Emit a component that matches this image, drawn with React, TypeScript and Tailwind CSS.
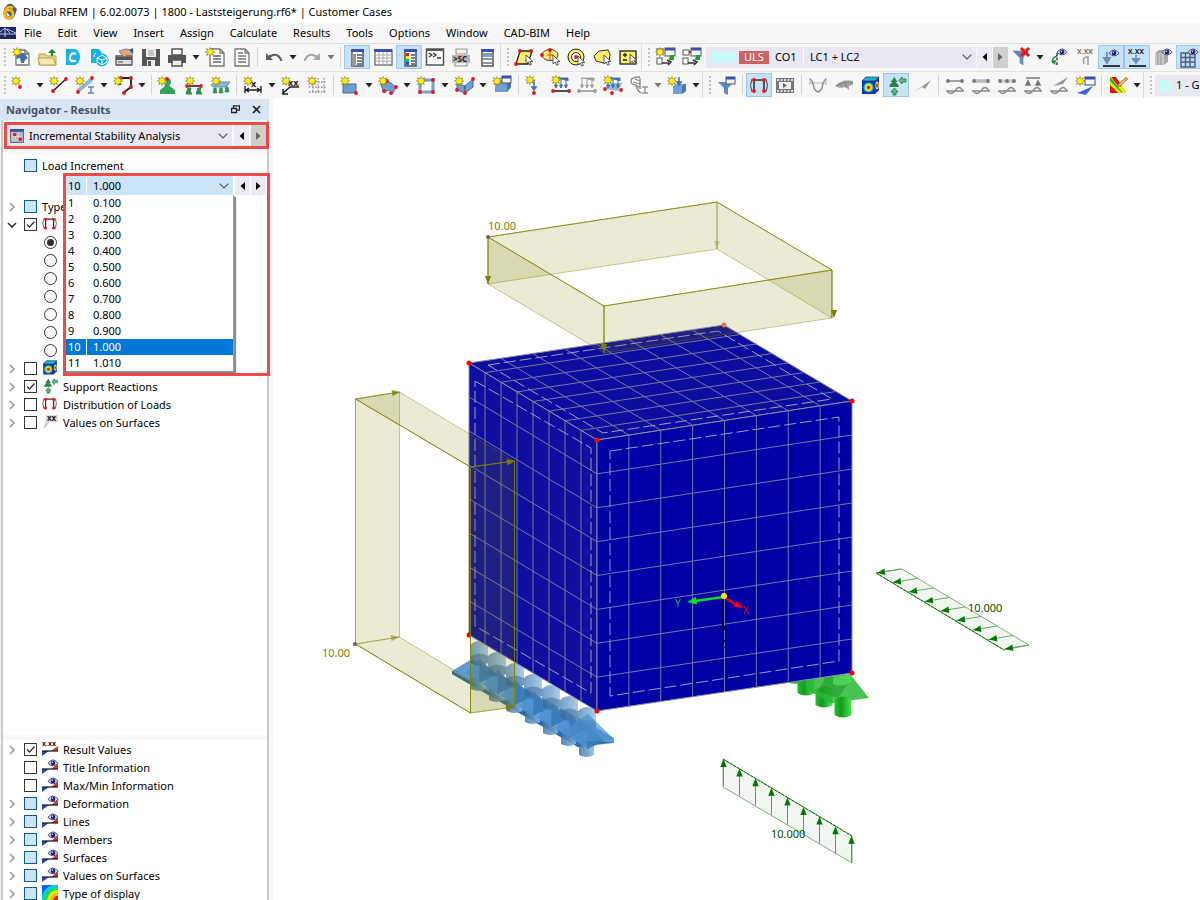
import { Fragment, type ReactNode } from "react";

type Icons = Record<string, ReactNode>;

/* ---------- icon building blocks (26 x 24 canvas) ---------- */

const Star = ({ x, y }: { x: number; y: number }) => (
  <g transform={`translate(${x} ${y})`}>
    <path d="M0-5.5L1-2.5 4.5-4 2.6-.9 5.5 0 2.6 1 4 4 1 2.7 0 5.5-1 2.7-4 4-2.6 1-5.5 0-2.6-.9-4.5-4-1-2.5Z" fill="#8f8a3c" />
    <circle r="2.8" fill="#ffee00" />
  </g>
);
const Dot = ({ x, y, c = "#e8141c" }: { x: number; y: number; c?: string }) => <circle cx={x} cy={y} r="1.9" fill={c} />;
const Eye = ({ x, y }: { x: number; y: number }) => (
  <g transform={`translate(${x} ${y})`}>
    <path d="M-5 .3Q0-6.500 5 .3Q0 5.500-5 .3Z" fill="#d3d5ee" stroke="#4b4d80" strokeWidth="1" />
    <circle r="2.300" fill="#1b1d76" />
    <circle cx="-.6" cy="-.8" r=".8" fill="#e4e6ff" />
  </g>
);
const Win = ({ x, y, w = 10, h = 8 }: { x: number; y: number; w?: number; h?: number }) => (
  <g>
    <rect x={x} y={y} width={w} height={h} fill="#f4f4f4" stroke="#555" />
    <rect x={x} y={y} width={w} height="2.5" fill="#3550b8" />
  </g>
);
const Sheet = ({ x, y, w = 14, h = 17 }: { x: number; y: number; w?: number; h?: number }) => (
  <path d={`M${x} ${y}h${w - 4}l4 4v${h - 4}h-${w}z M${x + w - 4} ${y}v4h4`} fill="#fff" stroke="#777" strokeWidth="1.3" />
);
const Cursor = ({ x, y }: { x: number; y: number }) => (
  <path transform={`translate(${x} ${y})`} d="M0 0v9l2.2-2 1.6 3.2 1.6-.8-1.6-3h3z" fill="#fff" stroke="#444" strokeWidth=".9" />
);
const Mini = ({ x, y, s = 8, c = "#222", t }: { x: number; y: number; s?: number; c?: string; t: string }) => (
  <text x={x} y={y} fontSize={s} fontWeight="700" fill={c}>{t}</text>
);
const Arrows = ({ c }: { c: string }) => (
  <path d="M8 5v8M13 5v8M18 5v8M7 5h13v3M6.500 12l1.500 3 1.500-3zM11.500 12l1.500 3 1.500-3zM16.500 12l1.500 3 1.500-3z" fill={c} stroke={c} strokeWidth="1" />
);
const Cube = () => (
  <g>
    <path d="M6 8l5-3h11v9l-4 5H6z" fill="#6f9fd0" />
    <path d="M6 8l5-3h11l-4 3z" fill="#b4cfe8" />
    <path d="M18 8l4-3v9l-4 5z" fill="#4878b0" />
  </g>
);
const Wave = () => <path d="M4 18h18M5 18q3 5 8 0q4-7 8 0" fill="none" stroke="#8a8a8a" strokeWidth="1.4" />;
const Bracket = () => (
  <g fill="none">
    <path d="M6 6Q3 12 6 19M20 6q3 6 0 13" stroke="#444" />
    <path d="M8 19V7h10v12" stroke="#333" strokeWidth="1.6" />
    <Dot x={8} y={7} /><Dot x={18} y={7} /><Dot x={8} y={18} /><Dot x={18} y={18} />
  </g>
);
const Contour = () => (
  <g>
    <path d="M5 8l4-4h13v13l-4 4H5z" fill="#1230c8" />
    <path d="M5 8l4-4h13l-4 4z" fill="#18b8d8" stroke="#123" strokeWidth=".6" />
    <ellipse cx="11.500" cy="14.500" rx="5" ry="5" fill="#15c8c0" /><ellipse cx="11.500" cy="14.500" rx="3.600" ry="3.800" fill="#e8e800" /><circle cx="11.500" cy="14.500" r="1.800" fill="#e01010" />
    <ellipse cx="20" cy="12.500" rx="1.700" ry="4" fill="#d8e820" /><ellipse cx="20" cy="12.500" rx=".8" ry="2" fill="#e01010" />
  </g>
);
const Reactions = () => (
  <g>
    <path d="M11.500 4l3 5h-2l3 3v2h-9v-2l3-3h-2z" fill="#2d7f49" />
    <path d="M10 22h3v-3h2l-3.500-4-3.500 4h2zM16 7.500L19 4v2h4v3h-4v2z" fill="#55c270" stroke="#216e38" strokeWidth=".8" />
  </g>
);

const ICONS: Icons = {
  newModel: <><Sheet x={8} y={5} w={13} h={15} /><path d="M8 14q1-7 8-6l4 5-3 2-1 3h-3l-1-5z" fill="#466a9b" /><Star x={9} y={7} /></>,
  open: <><path d="M5 9h6l2 2h9v9H5z" fill="#e8d889" stroke="#b5a353" /><path d="M4 13h15l3 7H6z" fill="#f3eab2" stroke="#b5a353" /><path d="M17 11V8h-3l4-4 4 4h-3v3z" fill="#128a2c" /></>,
  cloud: <><path d="M6 4h9q5 2 5 8t-5 8H6z" fill="#12b4e4" /><path d="M16 9q-5-2-6 3t6 4" fill="none" stroke="#fff" strokeWidth="2.2" /></>,
  cloudCube: <><path d="M5 4h8l3 4v10H5z" fill="#12b4e4" /><circle cx="16" cy="15" r="6.500" fill="#12b4e4" /><path d="M16 10l5 3v4l-5 3-5-3v-4zM11 13l5 2 5-2M16 15v5M10 8q-2 1-2 4" fill="none" stroke="#fff" /></>,
  cards: <><path d="M4 11h16v9H4z" fill="#ddd" stroke="#555" strokeWidth="1.300" /><path d="M4 12h16v3H4z" fill="#555" /><path d="M7 6l6-2 8 1-1 6-4-1-4 2-3-3z" fill="#dba98a" stroke="#84604c" strokeWidth=".7" /><path d="M17 5l4-2v6z" fill="#2857a0" /><path d="M6 17h5" stroke="#555" /></>,
  save: <><path d="M4 4h18v17H4z" fill="#555" /><path d="M8 4h10v8H8zM9 15h8v6H9z" fill="#eee" /><path d="M10 6h6M10 8h6M10 10h6" stroke="#999" /><path d="M10 16h3v5h-3z" fill="#555" /></>,
  print: <><path d="M8 4h10v6H8z" fill="#fff" stroke="#555" strokeWidth="1.500" /><path d="M4 10h18v8H4z" fill="#555" /><path d="M8 15h10v6H8z" fill="#eee" stroke="#555" strokeWidth="1.500" /></>,
  report: <><Sheet x={8} y={4} /><path d="M11 11h8M11 14h8M11 17h8" stroke="#666" strokeWidth="1.300" /><Star x={8} y={7} /></>,
  doc: <><Sheet x={7} y={4} /><path d="M10 8h5M10 11h8M10 14h8M10 17h8" stroke="#777" strokeWidth="1.300" /></>,
  undo: <path d="M5 8v7h7l-2.500-2.500q6-5 10 3.500h2Q18 5 7.500 10.500z" fill="#5d5d5d" />,
  redo: <path d="M21 8v7h-7l2.500-2.500q-6-5-10 3.500h-2Q8 5 18.500 10.500z" fill="#a6a6a6" />,
  navigator: <><rect x="8" y="5" width="11" height="16" fill="#fff" stroke="#555" strokeWidth="1.500" /><path d="M7 4h13v3H7z" fill="#3550b8" /><path d="M8 9h4v12H8z" fill="#999" /><path d="M13 10h5M13 13h5M13 16h5M13 19h5" stroke="#555" strokeWidth="1.300" /></>,
  table: <><rect x="5" y="5" width="17" height="15" fill="#fff" stroke="#666" strokeWidth="1.300" /><path d="M4 4h18v3H4z" fill="#3550b8" /><path d="M5 10h17M5 13h17M5 16h17M9 7v13M13 7v13M17 7v13" stroke="#aaa" /></>,
  panel: <><rect x="9" y="5" width="11" height="16" fill="#fff" stroke="#555" strokeWidth="1.500" /><path d="M8 4h13v3H8z" fill="#3550b8" /><path d="M10 8h3v3h-3z" fill="#e11" /><path d="M10 11h3v3h-3z" fill="#ee0" /><path d="M10 14h3v3h-3z" fill="#0c6" /><path d="M10 17h3v3h-3z" fill="#15e" /><path d="M15 10h4M15 13h4M15 16h4M15 19h4" stroke="#555" strokeWidth="1.300" /></>,
  console: <><rect x="4.500" y="4" width="17" height="16" fill="#fff" stroke="#555" strokeWidth="1.500" /><path d="M4 4h18v2H4z" fill="#555" /><path d="M7 8l3 2-3 2M11 8l3 2-3 2M15 13h4" fill="none" stroke="#333" strokeWidth="1.300" /></>,
  script: <><path d="M8 4h11v5H8zM7 17h12v4H7z" fill="#eee" stroke="#999" strokeWidth="1.200" /><path d="M4 10h18v8H4z" fill="#b4b4b4" /><Mini x={5} y={17} s={8} t=">SC" /></>,
  list: <><rect x="8" y="5" width="11" height="16" fill="#fff" stroke="#555" strokeWidth="1.500" /><path d="M7 4h13v3H7z" fill="#3550b8" /><path d="M9 9h9M9 14h9M9 18h9" stroke="#777" strokeWidth="1.300" /><path d="M9 11h9" stroke="#38c" strokeWidth="1.500" /></>,
  selRhomb: <><path d="M9 6h12l-4 13H5z" fill="#fbef6a" stroke="#222" strokeWidth="1.300" /><Dot x={9} y={6} /><Dot x={20} y={6} /><Dot x={5} y={19} /><Cursor x={15} y={10} /></>,
  selEllipse: <><ellipse cx="13" cy="10" rx="8" ry="5.500" fill="#fbef6a" stroke="#444" /><path d="M13 6v9M10 10h6" stroke="#e11" strokeWidth=".8" /><Dot x={5} y={10} /><Dot x={13} y={5} /><Cursor x={16} y={10} /></>,
  selRing: <><circle cx="13" cy="12" r="8" fill="#fbef6a" stroke="#222" /><circle cx="13" cy="12" r="4.500" fill="#fff" stroke="#222" /><Dot x={13} y={12} /><Cursor x={15} y={11} /></>,
  selPoly: <><path d="M5 11l5-5 9-1 2 4-1 8-5 1-8-2z" fill="#fbef6a" stroke="#333" /><Cursor x={15} y={10} /></>,
  selBox: <><rect x="5" y="6" width="16" height="13" fill="#fbef6a" stroke="#222" strokeWidth="1.300" /><path d="M8 10h4M10 8v4M8 15h4" stroke="#222" strokeWidth="1.300" /><Cursor x={15} y={9} /></>,
  caseNew: <><Win x={5} y={4} w={6} h={5} /><Win x={13} y={3} /><Star x={8} y={7} /><rect x="5" y="13" width="5" height="6" fill="#fff" stroke="#555" /><path d="M18 10h4v5h-5z" fill="#16a038" /><path d="M10 18h7M15 15l4 2-3 3" fill="none" stroke="#333" strokeWidth="1.500" /></>,
  caseGo: <><rect x="5" y="5" width="6" height="5" fill="#fff" stroke="#555" /><Win x={13} y={3} /><rect x="5" y="13" width="5" height="6" fill="#fff" stroke="#555" /><path d="M18 10h4v5h-5z" fill="#16a038" /><path d="M11 7h2M10 18h7M15 15l4 2-3 3" fill="none" stroke="#333" strokeWidth="1.500" /></>,
  filterX: <><path d="M5 6h15l-5 7v7l-3-2v-5z" fill="#5d8bc4" stroke="#7a8aa0" strokeWidth=".7" /><path d="M13 3l8 8M21 3l-8 8" stroke="#f01414" strokeWidth="3" /></>,
  loadEye: <><path d="M11 11q-6 2-4 7" fill="none" stroke="#189038" strokeWidth="1.500" /><path d="M5 16l4 4 1-5z" fill="#189038" /><path d="M11 8v12" stroke="#333" strokeDasharray="3 1.500" strokeWidth="1.300" /><Eye x={16} y={7} /></>,
  valDim: <><Mini x={5} y={9} s={7} c="#777" t="X.XX" /><path d="M15 12q-5 0-3 7M16 11v9" fill="none" stroke="#999" strokeWidth="1.500" /></>,
  loadEyeBox: <><path d="M9 7v8M6 13l3 5 3-5z" fill="#6f8fb4" stroke="#6f8fb4" strokeWidth="1.800" /><path d="M5 21h17" stroke="#222" strokeWidth="1.800" /><Eye x={16} y={8} /></>,
  valBox: <><Mini x={4} y={9} s={7} t="X.XX" /><path d="M12 10v5M9 14l3 4 3-4z" fill="#6f8fb4" stroke="#6f8fb4" strokeWidth="1.800" /><path d="M5 21h17" stroke="#222" strokeWidth="1.800" /></>,
  solidEye: <><path d="M5 8l4-3h9v12l-4 3H5z" fill="#aaa" /><path d="M5 8h9v12H5z" fill="#c8c8c8" /><path d="M8 8v12M11 8v12" stroke="#999" /><Eye x={17} y={7} /></>,
  meshEye: <><path d="M5 8h14v14H5z" fill="#c5dbf0" /><path d="M5 8h14v14H5zM9.500 8v14M14 8v14M5 12.500h14M5 17h14" fill="none" stroke="#446484" strokeWidth="1.400" /><Eye x={17} y={7} /></>,
  node: <><Star x={8} y={8} /><Dot x={12} y={14} /></>,
  line: <><path d="M7 18L20 6" stroke="#222" strokeWidth="1.600" /><Dot x={20} y={6} /><Dot x={7} y={18} /><Star x={8} y={8} /></>,
  member: <><path d="M6 18L20 6" stroke="#8fb4dc" strokeWidth="4" /><Dot x={20} y={5} /><Dot x={6} y={19} /><path d="M16 14h6M19 14v6M16 20h6" stroke="#6a7fa8" strokeWidth="1.500" /><Star x={8} y={8} /></>,
  polyline: <><path d="M11 5h10v9l-8 6M10 5v7" fill="none" stroke="#222" strokeWidth="1.800" /><Dot x={11} y={5} /><Dot x={21} y={5} /><Dot x={21} y={14} /><Dot x={14} y={20} /><Star x={8} y={8} /></>,
  support: <><path d="M12 5q4 0 4 3.500T14 12l2 2 4 3v4H5v-4l4-3 1-2z" fill="#36a262" /><Dot x={12} y={6} /><Star x={7} y={8} /></>,
  lineSupport: <><path d="M5 13h16" stroke="#222" strokeWidth="1.600" /><path d="M5 21l1-3 1-3h3l-1 3 2 3zM15 21l1-3 1-3h3l-1 3 2 3z" fill="#2d9150" stroke="#2d9150" /><Dot x={6} y={13} /><Dot x={20} y={13} /><Star x={9} y={8} /></>,
  surfSupport: <><path d="M4 12l5-3h14l-4 5H6z" fill="#8ebad8" stroke="#467090" strokeWidth=".7" /><path d="M6 20l1-5h2l1 5zM12 20l1-5h2l1 5zM18 19l1-5h2l1 5z" fill="#2d9150" stroke="#2d9150" strokeWidth=".7" /><Star x={9} y={8} /></>,
  dimension: <><path d="M5 13v7M21 13v7M6 17h14M9 15l-3 2 3 2M17 15l3 2-3 2" fill="none" stroke="#222" strokeWidth="1.400" /><Mini x={11} y={14} s={9} t="x" /><Star x={8} y={8} /></>,
  note: <><path d="M21 14H12l-8 7M5 16v5h5" fill="none" stroke="#222" strokeWidth="1.400" /><Mini x={10} y={13} s={9} t="xx" /><Star x={8} y={8} /></>,
  grid: <><path d="M9 5v15M14 5v15M20 5v15M5 9h17M5 14h17M5 19h17" stroke="#8590a0" strokeDasharray="1.500 1.500" strokeWidth="1.300" /><Star x={8} y={8} /></>,
  surface: <><path d="M6 11h13v9H6z" fill="#6f9fd0" stroke="#476d98" /><Dot x={19} y={20} /><Star x={8} y={8} /></>,
  shell: <><path d="M6 12q7-8 15 3l-4 6q-1-5-4-4l-4 3z" fill="#6f9fd0" stroke="#476d98" /><Dot x={21} y={14} /><Dot x={9} y={18} /><Dot x={16} y={20} /><Dot x={12} y={8} /><Star x={8} y={8} /></>,
  opening: <><rect x="7" y="7" width="13" height="12" fill="#fff" stroke="#7f9fc4" strokeWidth="3" /><Dot x={7} y={19} /><Dot x={20} y={19} /><Dot x={20} y={7} /><Dot x={7} y={7} /><Star x={8} y={8} /></>,
  solid: <><path d="M6 11l8 2 8-7v8l-8 6-8-3z" fill="#6f9fd0" stroke="#476d98" /><path d="M14 13v7" stroke="#345" /><Dot x={22} y={6} /><Dot x={14} y={20} /><Dot x={6} y={17} /><Star x={8} y={8} /></>,
  solidWin: <><Cube /><Win x={13} y={3} w={9} h={7} /><Star x={8} y={8} /></>,
  nodalLoad: <><path d="M12 7v8M10 14l2 3 2-3z" fill="#3f6fb4" stroke="#3f6fb4" strokeWidth="1.500" /><Dot x={12} y={20} /><Star x={8} y={7} /></>,
  lineLoad: <><Arrows c="#3f6fb4" /><path d="M5 18h16" stroke="#222" strokeWidth="1.600" /><Dot x={5} y={18} /><Dot x={21} y={18} /><Star x={8} y={7} /></>,
  grayLoad: <><Arrows c="#a2a2a2" /><path d="M5 18h16" stroke="#999" strokeWidth="1.600" /><Dot x={5} y={18} c="#999" /><Dot x={21} y={18} c="#999" /></>,
  surfLoad: <><path d="M5 16l6-6h11l-4 8z" fill="#8ebad8" /><Arrows c="#3f6fb4" /><Dot x={5} y={16} /><Dot x={12} y={20} /><Dot x={21} y={17} /><Star x={8} y={7} /></>,
  imposed: <><path d="M14 4q-9 0-9 4t5 4q1 5 5 8M14 5v11M7 9l7 2M9 6l5 2M10 13l4 1" fill="none" stroke="#8a8a8a" strokeWidth="1.300" /><path d="M16 14h6M19 14v6M16 20h6" stroke="#999" strokeWidth="1.500" /></>,
  solidLoad: <><path d="M9 13l4-2h9v7l-4 3H9z" fill="#6f9fd0" /><path d="M18 13l4-2v7l-4 3z" fill="#4878b0" /><path d="M15 4v6M13 9l2 3 2-3z" fill="#3f6fb4" stroke="#3f6fb4" strokeWidth="1.500" /><Star x={8} y={8} /></>,
  filterWin: <><path d="M5 9h16l-6 6v7l-4-2v-5z" fill="#5d8bc4" /><Win x={13} y={4} w={9} h={7} /></>,
  frame: <Bracket />,
  film: <><rect x="4" y="5" width="18" height="15" fill="#777" /><path d="M5 7h16M5 18h16" stroke="#fff" strokeDasharray="2 1.500" strokeWidth="1.500" /><path d="M7 9h12v7H7z" fill="#eee" /><path d="M11 10v5l4-2.500z" fill="#666" /></>,
  moment: <><path d="M4 10h18M5 5v7M21 5v7" stroke="#bbb" /><path d="M5 6q3 2 4 9 4 8 8 0 1-7 4-9" fill="none" stroke="#888" strokeWidth="1.400" /></>,
  fan: <><path d="M4 13q8-8 18-5v4l-4 1v4q-3-4-9-2z" fill="#a4a4a4" /><path d="M5 13q8-5 17-3M8 11l4 3M13 9l3 5" fill="none" stroke="#777" strokeWidth=".8" /></>,
  contour: <Contour />,
  reactions: <Reactions />,
  plane: <path d="M5 19L22 7l-6 9-3-2z" fill="#9a9a9a" />,
  r1: <><path d="M6 8h14" stroke="#888" strokeWidth="1.500" /><Dot x={6} y={8} c="#777" /><Dot x={20} y={8} c="#777" /><Wave /></>,
  r2: <><path d="M6 8h14" stroke="#bbb" strokeWidth="3.500" /><Dot x={6} y={8} c="#777" /><Dot x={20} y={8} c="#777" /><Wave /></>,
  r3: <><path d="M6 8h14" stroke="#ccc" strokeWidth="3.500" /><Dot x={6} y={8} c="#777" /><Dot x={13} y={8} c="#777" /><Dot x={20} y={8} c="#777" /><Wave /></>,
  r4: <><path d="M6 5h14M6 12l2-4 2 4zM16 12l2-4 2 4z" fill="#777" stroke="#777" strokeWidth="1.500" /><Wave /></>,
  r5: <><path d="M7 13l15-9-5 7z" fill="#999" /><Wave /></>,
  r6: <><path d="M5 20q8-3 16-7l-7 9z" fill="#3a63dc" /><Win x={13} y={4} /><Star x={8} y={8} /></>,
  colors: <><path d="M5 4h16v16H5z" fill="#fff" /><path d="M5 4l16 16H5z" fill="#16b030" /><path d="M5 8l12 12h-4L5 12z" fill="#f4ea00" /><path d="M5 12l8 8H5z" fill="#e81010" /><path d="M5 4h5l11 14v2h-3z" fill="#f4ea00" /><path d="M6 4h5l6 9-3 1z" fill="#e81010" /><path d="M12 13l9-9 2 2-9 8z" fill="#f0b050" stroke="#b07030" strokeWidth=".7" /></>,
};

/* ---------- toolbar ---------- */

const Caret = ({ muted }: { muted?: boolean }) => (
  <button type="button" aria-label="More" className="flex h-6 w-3 shrink-0 items-center justify-center">
    <svg width="8" height="5" viewBox="0 0 8 5"><path d="M.5 0h7L4 4.500z" fill={muted ? "#777" : "#222"} /></svg>
  </button>
);
const Sep = () => <span className="mx-[3px] h-5 w-px shrink-0 bg-[#d4d4d4]" />;
const Grip = () => (
  <svg className="w-2 shrink-0" height="20" viewBox="0 0 8 20">
    <path d="M5 1v18" stroke="#c4c4c4" strokeWidth="2" strokeDasharray="2 2" />
  </svg>
);
const GroupEdge = () => <span className="mr-0.5 w-px shrink-0 self-stretch bg-[#dcdcdc]" />;

/* "v" caret, "w" muted caret, "|" separator, "[" start of a docked group; "*" marks a pressed tool */
function Tools({ items }: { items: string }) {
  return (
    <>
      {items.split(" ").map((item, i) => {
        if (item === "v") return <Caret key={i} />;
        if (item === "w") return <Caret key={i} muted />;
        if (item === "|") return <Sep key={i} />;
        if (item === "[") return <Fragment key={i}><GroupEdge /><Grip /></Fragment>;
        const pressed = item.startsWith("*");
        const name = pressed ? item.slice(1) : item;
        return (
          <button
            key={i}
            type="button"
            aria-label={name}
            aria-pressed={pressed}
            className={`h-6 w-[26px] shrink-0 ${pressed ? "bg-[#c7e1f7] outline -outline-offset-1 outline-[#96c8f0]" : ""}`}
          >
            <svg width="26" height="24" viewBox="0 0 26 24">{ICONS[name]}</svg>
          </button>
        );
      })}
    </>
  );
}

const Chevron = () => (
  <svg className="pointer-events-none mr-1 shrink-0" width="10" height="6" viewBox="0 0 10 6">
    <path d="M.7.7L5 5 9.300.7" fill="none" stroke="#555" strokeWidth="1.200" />
  </svg>
);

function Step({ dir, dim, className }: { dir: "prev" | "next"; dim?: boolean; className: string }) {
  return (
    <button type="button" aria-label={dir} className={`flex w-[15px] shrink-0 items-center justify-center ${className} ${dim ? "bg-[#cfcfcf]" : "bg-[#ebebf4]"}`}>
      <svg width="5" height="8" viewBox="0 0 5 8">
        <path d={dir === "prev" ? "M5 0v8L.5 4z" : "M0 0v8l4.500-4z"} fill={dim ? "#666" : "#000"} />
      </svg>
    </button>
  );
}

/* ---------- navigator ---------- */

const ValueIcon = ({ text }: { text?: boolean }) => (
  <svg className="overflow-visible" width="16" height="16" viewBox="0 0 16 16">
    <path d="M0 15V10h7z" fill="#2448b8" /><path d="M16 5v5H9z" fill="#e03018" /><path d="M0 10h16" stroke="#222" strokeWidth="1.300" />
    {text ? <Mini x={0} y={5} s={7} t="x.xx" /> : <Eye x={11} y={4} />}
  </svg>
);
const Wrap = ({ children }: { children: ReactNode }) => <svg width="16" height="16" viewBox="4 3 19 20">{children}</svg>;
const RampIcon = () => (
  <svg width="16" height="16" viewBox="0 0 16 16">
    <path d="M0 0h16v16H0z" fill="#1060e8" /><circle cx="16" cy="16" r="17" fill="#10c8e8" /><circle cx="16" cy="16" r="14" fill="#20d850" /><circle cx="16" cy="16" r="11" fill="#d8f010" /><circle cx="16" cy="16" r="8" fill="#f8b010" /><circle cx="16" cy="16" r="5" fill="#e82010" />
  </svg>
);
const XXIcon = () => (
  <svg width="16" height="16" viewBox="0 0 16 16"><path d="M4 1h12v7H7l-5 6z" fill="#dcdcdc" /><path d="M7 8l-5 6" stroke="#aaa" /><Mini x={5} y={7} s={8} t="xx" /></svg>
);

type RowData = { label: string; hidden?: boolean; state?: "on" | "off" | "mixed"; arrow?: "closed" | "open"; icon?: ReactNode };

function Box({ id, state, name }: { id: string; state: string; name?: string }) {
  return (
    <span className="relative mb-0.5 size-[13px] shrink-0">
      <input
        id={id}
        type="checkbox"
        aria-label={name}
        defaultChecked={state === "on"}
        className={`block size-[13px] appearance-none border ${state === "mixed" ? "border-[#0a5c9e] bg-[#cce4f7]" : "border-[#333] bg-white"}`}
      />
      {state === "on" && (
        <svg className="pointer-events-none absolute inset-0" width="13" height="13" viewBox="0 0 13 13"><path d="M3 6.500L5.500 9l5-5.500" fill="none" stroke="#333" strokeWidth="1.300" /></svg>
      )}
    </span>
  );
}

function Row({ label, hidden, state = "off", arrow, icon }: RowData) {
  const id = `row-${label.replace(/\W/g, "-")}-${state}`;
  return (
    <li className="flex h-[18px] items-center gap-[5px] pl-1">
      <span className="flex w-3 shrink-0">
        {arrow && (
          <button type="button" aria-label={`Toggle ${label}`}>
            <svg width="10" height="10" viewBox="0 0 10 10">
              <path d={arrow === "open" ? "M1 3l4 4 4-4" : "M3 1l4 4-4 4"} fill="none" stroke={arrow === "open" ? "#333" : "#999"} strokeWidth="1.600" />
            </svg>
          </button>
        )}
      </span>
      <Box id={id} state={state} name={hidden ? label : undefined} />
      {icon && <span className="mb-0.5 flex size-4 shrink-0">{icon}</span>}
      {!hidden && <label htmlFor={id} className="whitespace-nowrap">{label}</label>}
    </li>
  );
}

const LOWER: RowData[] = [
  { label: "Result Values", state: "on", arrow: "closed", icon: <ValueIcon text /> },
  { label: "Title Information", icon: <ValueIcon /> },
  { label: "Max/Min Information", icon: <ValueIcon /> },
  ...["Deformation", "Lines", "Members", "Surfaces", "Values on Surfaces"].map(
    (label): RowData => ({ label, state: "mixed", arrow: "closed", icon: <ValueIcon /> }),
  ),
  { label: "Type of display", state: "mixed", arrow: "closed", icon: <RampIcon /> },
];

const STEPS = ["0.100", "0.200", "0.300", "0.400", "0.500", "0.600", "0.700", "0.800", "0.900", "1.000", "1.010"];

function IncrementPicker() {
  return (
    <li className="relative flex h-[23px] pl-[61px]">
      <div className="relative z-10 mt-px flex h-[19px] w-[169px] items-center bg-[#cce4f7]">
        <span className="w-[22px] pl-1">10</span>
        <span className="h-4 w-px bg-white" />
        <select aria-label="Load increment" className="min-w-0 flex-1 appearance-none bg-transparent pl-1.5 outline-none"><option>1.000</option></select>
        <Chevron />
      </div>
      <div className="relative z-10 mt-px ml-0.5 flex h-[19px] gap-px"><Step dir="prev" className="h-[19px]" /><Step dir="next" className="h-[19px]" /></div>
      <ul role="listbox" aria-label="Increments" className="absolute top-5 left-[61px] z-10 w-[170px] border-r border-[#999] bg-white shadow-[2px_2px_1px_#8c8c8c]">
        {STEPS.map((v, i) => (
          <li key={v} role="option" aria-selected={i === 9} className={`flex h-4 items-center ${i === 9 ? "bg-[#0078d7] text-white" : ""}`}>
            <span className="w-[22px] pl-1">{i + 1}</span>
            <span className={`h-4 w-px ${i === 9 ? "bg-white" : ""}`} />
            <span className="pl-1.5">{v}</span>
          </li>
        ))}
      </ul>
      <div className="pointer-events-none absolute -top-0.5 left-[60px] z-20 h-[203px] w-[207px] border-3 border-[#ee4b46]" />
    </li>
  );
}

function Navigator() {
  return (
    <aside className="flex w-[269px] shrink-0 flex-col bg-[#f7f7f7]" aria-label="Navigator">
      <header className="mt-px flex h-[21px] shrink-0 items-center bg-[#d8e5f2] px-2 text-[#45536a]">
        <h2 className="-ml-0.5 flex-1 text-[11px] font-bold">Navigator - Results</h2>
        <button type="button" aria-label="Float" className="mr-3"><svg width="9" height="9" viewBox="0 0 9 9"><path d="M.5 3.500h5v4h-5zM2.500 3V.8h6v4.400H6" fill="none" stroke="#222" strokeWidth="1.300" /></svg></button>
        <button type="button" aria-label="Close"><svg width="9" height="9" viewBox="0 0 9 9"><path d="M1 1l7 7M8 1L1 8" stroke="#222" strokeWidth="1.600" /></svg></button>
      </header>
      <div className="ml-px flex min-h-0 flex-1 flex-col border-x-2 border-[#c8c8d3] pt-0.5">
        <div className="relative z-10 -mr-0.5 ml-px flex h-[27px] shrink-0 items-stretch gap-0.5 border-3 border-[#ee4b46] bg-[#f7f7f7]">
          <div className="flex flex-1 items-center bg-[#e8e8f2]">
            <svg className="ml-[3px]" width="14" height="14" viewBox="0 0 15 15"><path d="M.5.5h14v14H.5z" fill="#b4b6c6" stroke="#5c5c6c" /><path d="M0 0h15v3H0z" fill="#3550a8" /><path d="M3 4v8h9M6 4v8M9 4v8M3 8h9" stroke="#d4d6e0" fill="none" /><Dot x={5} y={6} /><Dot x={11} y={11} /></svg>
            <select aria-label="Analysis type" className="ml-[5px] min-w-0 flex-1 appearance-none bg-transparent outline-none"><option>Incremental Stability Analysis</option></select>
            <Chevron />
          </div>
          <div className="flex gap-0.5"><Step dir="prev" className="h-full" /><Step dir="next" dim className="h-full" /></div>
        </div>
        <ul className="mt-1.5 h-0 flex-1 bg-white pt-0.5">
          <Row label="Load Increment" state="mixed" />
          <IncrementPicker />
          <Row label="Type" state="mixed" arrow="closed" />
          <Row label="Members" hidden state="on" arrow="open" icon={<Wrap><Bracket /></Wrap>} />
          {["u", "v", "w", "N", "Vy", "Vz", "M"].map((n, i) => (
            <li key={n} className="flex h-[18px] items-center pl-[41px]">
              <input type="radio" name="component" aria-label={n} defaultChecked={i === 0} className="mb-0.5 size-[13px] appearance-none rounded-full border border-[#333] bg-white checked:bg-[#333] checked:bg-clip-content checked:p-0.5" />
            </li>
          ))}
          <Row label="Solids" arrow="closed" icon={<Wrap><Contour /></Wrap>} />
          <Row label="Support Reactions" state="on" arrow="closed" icon={<Wrap><Reactions /></Wrap>} />
          <Row label="Distribution of Loads" arrow="closed" icon={<Wrap><Bracket /></Wrap>} />
          <Row label="Values on Surfaces" arrow="closed" icon={<XXIcon />} />
        </ul>
        <ul className="mt-[5px] h-40 shrink-0 overflow-hidden bg-white pt-px">
          {LOWER.map((r) => <Row key={r.label} {...r} />)}
        </ul>
      </div>
    </aside>
  );
}

/* ---------- model view ---------- */

type P = [number, number];
const lerp = (a: P, b: P, t: number): P => [a[0] + (b[0] - a[0]) * t, a[1] + (b[1] - a[1]) * t];
const pts = (...p: P[]) => p.map((q) => q.join(",")).join(" ");

const A: P = [469, 363], B: P = [724, 325], C: P = [852, 401], D: P = [597, 440];
const A2: P = [469, 635], C2: P = [852, 673], D2: P = [597, 711];

function Face({ q, fill, inset }: { q: [P, P, P, P]; fill: string; inset: [P, P, P, P] }) {
  const [a, b, c, d] = q;
  return (
    <g>
      <polygon points={pts(a, b, c, d)} fill={fill} stroke="#8c8ca4" strokeWidth="1" />
      {[1, 2, 3, 4, 5, 6, 7].map((i) => {
        const t = i / 8;
        const [p1, p2, p3, p4] = [lerp(a, b, t), lerp(d, c, t), lerp(a, d, t), lerp(b, c, t)];
        return <path key={i} d={`M${p1}L${p2}M${p3}L${p4}`} stroke="#7676a2" strokeWidth="1" />;
      })}
      <polygon points={pts(...inset)} fill="none" stroke="#9c9cc4" strokeDasharray="12 4" />
    </g>
  );
}

const Olive = ({ walls }: { walls: P[][] }) => (
  <g>
    {walls.map((w, i) => <polygon key={i} points={pts(...w)} fill="#808000" fillOpacity=".165" stroke="#808000" strokeOpacity=".5" strokeWidth=".8" />)}
  </g>
);

const U: P[] = [[488, 237], [717, 202], [832, 270], [604, 306]];
const L: P[] = [[488, 284], [717, 249], [832, 318], [604, 353]];
const V: P[] = [[355.5, 399], [399.5, 392], [514.5, 461], [470.5, 467]];
const W: P[] = [[355.5, 644], [399.5, 637], [514.5, 707], [470.5, 713]];

function Head({ x, y, a, c, o = 1, s = 1 }: { x: number; y: number; a: number; c: string; o?: number; s?: number }) {
  return <path transform={`translate(${x} ${y}) rotate(${a}) scale(${s})`} d="M0 0l-8-3.200v6.400z" fill={c} opacity={o} />;
}

/* upper cylinder, cone and foot of one elastic support */
function BlueSupport({ x, y }: { x: number; y: number }) {
  return (
    <g transform={`translate(${x} ${y})`}>
      <path d="M-8 28v12q8 4 15 0v-12z" fill="url(#blueCyl)" opacity=".85" />
      <path d="M1 10l16 16-16 8-16-10z" fill="#4a90d0" opacity=".75" />
      <path d="M1 10l-1 24 17-8z" fill="#2f6ea8" opacity=".6" />
      <path d="M-9-4Q0-12 9-4v18q-9 6-18 0z" fill="url(#blueCyl)" opacity=".7" />
      <path d="M-8 7q8-5 17 0v7q-9 6-17 0z" fill="#2b5e90" opacity=".45" />
    </g>
  );
}

const GreenPost = ({ x, y }: { x: number; y: number }) => (
  <path d={`M${x - 8.5} ${y}v16q8.500 5 17 0v-16q-8.500-5-17 0z`} fill="url(#greenCyl)" />
);

function ModelView() {
  const nine = [0, 1, 2, 3, 4, 5, 6, 7, 8];
  return (
    <svg className="h-full w-full" viewBox="273 98 927 802" role="img" aria-label="Solid model with loads and supports" fontSize="11">
      <defs>
        <linearGradient id="blueCyl"><stop offset="0" stopColor="#3f74a8" /><stop offset=".5" stopColor="#5c93c6" /><stop offset="1" stopColor="#8fb8dc" /></linearGradient>
        <linearGradient id="greenCyl"><stop offset="0" stopColor="#1fc02a" /><stop offset=".4" stopColor="#169a20" /><stop offset="1" stopColor="#45e850" /></linearGradient>
      </defs>

      {/* line supports */}
      <path d="M785 682q12 4 25-1v-4l-25 3z" fill="#16b822" />
      <GreenPost x={806} y={677} /><GreenPost x={824} y={689} />
      <path d="M806 678l44-4 19 24-38 5-25-14z" fill="#28b832" opacity=".85" />
      <path d="M826 676l24 4-12 18-20-6z" fill="#127a1c" opacity=".35" />
      <GreenPost x={843} y={699} /><path d="M833 684q9 4 18-2v-8l-18 4z" fill="#50e05a" opacity=".75" />
      <path d="M452 671l20-12 142 79v5l-36 4-126-73z" fill="#5f9cd6" />
      <path d="M452 671l126 70 36 1-36 5-126-73z" fill="#2d6aa4" />
      {[0, 1, 2, 3, 4, 5, 6].map((i) => <BlueSupport key={i} x={479 + i * 18} y={649 + i * 11} />)}
      <path d="M588 714l26 25-36 4-16-12z" fill="#4a8ecc" opacity=".7" />

      {/* solid */}
      <Face q={[A, B, C, D]} fill="#0c0c9e" inset={[[488, 365], [718, 331], [832, 399], [603, 433]]} />
      <Face q={[A, D, D2, A2]} fill="#0e0e9f" inset={[[475, 381], [591, 448], [591, 693], [475, 626]]} />
      <Face q={[D, C, C2, D2]} fill="#0000a7" inset={[[610, 451], [839, 417], [839, 661], [610, 696]]} />
      {[A, C, D, A2, C2, D2].map((p, i) => <circle key={i} cx={p[0]} cy={p[1]} r="2.500" fill="#f00" />)}
      <circle cx={B[0]} cy={B[1]} r="2.500" fill="#e07a70" />

      {/* surface loads */}
      <Olive walls={[0, 1, 2, 3].map((i) => [U[i], U[(i + 1) % 4], L[(i + 1) % 4], L[i]])} />
      <polygon points={pts(...U)} fill="none" stroke="#808000" strokeWidth=".8" />
      <path d="M488 237v47M604 306v47M832 270v48" stroke="#808000" strokeWidth=".8" />
      <Head x={488} y={284} a={90} c="#808000" /><Head x={717} y={249} a={90} c="#808000" o={0.3} /><Head x={604} y={352} a={90} c="#808000" /><Head x={834} y={318} a={90} c="#808000" />
      <Olive walls={[0, 1, 2, 3].map((i) => [V[i], V[(i + 1) % 4], W[(i + 1) % 4], W[i]]).filter((_, i) => i % 2 === 0)} />
      <Olive walls={[V, W]} />
      <path d="M355.500 399L470.500 467 514.500 461M355.500 644L470.500 713M470.500 467V713M514.500 461V707" fill="none" stroke="#808000" strokeWidth=".9" />
      <path d="M399.500 392L355.500 399V644" fill="none" stroke="#808000" strokeOpacity=".5" />
      <Head x={400} y={392} a={-8} c="#808000" o={0.8} /><Head x={515} y={461} a={-8} c="#808000" /><Head x={399} y={637} a={-8} c="#808000" o={0.5} /><Head x={514} y={707} a={-8} c="#808000" />
      <circle cx="488" cy="237" r="2" fill="#666" /><circle cx="355" cy="644" r="2" fill="#666" />
      <g fill="#808000"><text x="488" y="230">10.00</text><text x="322" y="657">10.00</text></g>

      {/* line loads */}
      <polygon points="876,573 902,569 1029,645 1004,650" fill="#f1f6f1" stroke="#5c9c5c" strokeWidth=".8" />
      <path d="M876 573l128 77" stroke="#006400" strokeDasharray="3 1" strokeWidth="1" />
      {nine.map((i) => {
        const x = 876 + i * 16, y = 573 + i * 9.5;
        return <g key={i}><path d={`M${x} ${y}l25-4`} stroke="#5c9c5c" strokeWidth=".9" /><Head x={x + 1} y={y} a={171} c="#007800" /></g>;
      })}
      <polygon points="723,759 852,836 852,863 723,787" fill="#f1f6f1" stroke="#5c9c5c" strokeWidth=".8" />
      <path d="M723 759l129 77" stroke="#006400" strokeDasharray="3 1" strokeWidth="1" />
      {nine.map((i) => {
        const x = 723 + i * 16, y = 759 + i * 9.6;
        return <g key={i}><path d={`M${x + 0.5} ${y}v27`} stroke="#5c9c5c" /><Head x={x + 0.5} y={y} a={-90} c="#007800" /></g>;
      })}
      <g fill="#005000"><text x="968" y="612">10.000</text><text x="771" y="838">10.000</text></g>

      {/* axes */}
      <path d="M723 598v28" stroke="#000060" strokeWidth="2" /><Head x={723} y={634} a={90} c="#000058" />
      <path d="M723 597l-28 4" stroke="#00e020" strokeWidth="2.500" /><Head x={687} y={602} a={172} c="#00e020" s={1.2} />
      <path d="M724 597l12 8" stroke="#e00010" strokeWidth="2.500" /><Head x={743} y={608} a={30} c="#f00010" s={1.1} />
      <circle cx="724" cy="596" r="3" fill="#ffe800" />
      <text x="675" y="607" fontSize="10" fill="#00c020">Y</text><text x="743" y="614" fontSize="10" fill="#e80010">X</text><text x="720" y="648" fontSize="10" fill="#000068">Z</text>
    </svg>
  );
}

/* ---------- window ---------- */

const MENU = ["File", "Edit", "View", "Insert", "Assign", "Calculate", "Results", "Tools", "Options", "Window", "CAD-BIM", "Help"];

export default function App() {
  return (
    <div className="flex h-screen flex-col overflow-hidden bg-[#f7f7f7] font-['Noto_Sans','Open_Sans',sans-serif] text-[11px] leading-4 text-black">
      <header className="flex h-[23px] shrink-0 items-center gap-[5px] bg-white pl-0.5">
        <svg width="16" height="18" viewBox="0 0 16 18"><path d="M2 6q3-6 8-5l5 5-2 6-4 2z" fill="#3d6285" /><path d="M11 5Q4 2 3 10q0 5 4 5t4-4-4-4-4 3" fill="none" stroke="#a87c10" strokeWidth="3.400" /><path d="M11 5Q4 2 3 10q0 5 4 5t4-4-4-4-4 3" fill="none" stroke="#f4bd28" strokeWidth="2.200" /></svg>
        <h1>Dlubal RFEM | 6.02.0073 | 1800 - Laststeigerung.rf6* | Customer Cases</h1>
      </header>
      <nav className="flex h-5 shrink-0 items-center gap-4">
        <svg className="-mr-2 shrink-0" width="16" height="12" viewBox="0 0 16 12"><path d="M0 0h16v12H0z" fill="#1f2566" /><path d="M0 7h16M0 5l5-4 5 5M5 1v9M7 2l9 4" fill="none" stroke="#d5dbee" strokeWidth=".9" /></svg>
        {MENU.map((m) => <button key={m} type="button">{m}</button>)}
      </nav>
      <div className="flex h-7 shrink-0 items-center border-t border-[#dedede] pb-px" role="toolbar" aria-label="Main">
        <Grip />
        <Tools items="newModel open cloud cloudCube cards save print v report doc | undo v redo w | *navigator table *panel console script list [ selRhomb selEllipse selRing selPoly selBox [ caseNew caseGo" />
        <div className="mr-px ml-0.5 flex h-[21px] w-[270px] shrink-0 items-center bg-[#e8e8f2]">
          <span className="ml-[5px] h-[11px] w-3 bg-[#c9fbfb]" /><span className="ml-px h-[11px] w-3 bg-[#c9fbfb]" />
          <span className="ml-[3px] flex h-[13px] w-[30px] items-center justify-center bg-[#cb6462] text-white">ULS</span>
          <span className="ml-1.5 w-7">CO1</span>
          <span className="h-4 w-px bg-white" />
          <select aria-label="Load combination" className="ml-1.5 min-w-0 flex-1 appearance-none bg-transparent outline-none"><option>LC1 + LC2</option></select>
          <Chevron />
        </div>
        <div className="flex gap-px"><Step dir="prev" className="h-[21px]" /><Step dir="next" dim className="h-[21px]" /></div>
        <Tools items="filterX v loadEye valDim *loadEyeBox *valBox solidEye *meshEye" />
      </div>
      <div className="flex h-[27px] shrink-0 items-center border-t border-[#e2e2e2]" role="toolbar" aria-label="Insert">
        <Grip />
        <Tools items="node v line member v polyline v | support lineSupport surfSupport | dimension v note grid | surface v shell v opening v solid v solidWin | nodalLoad lineLoad grayLoad surfLoad imposed w solidLoad v [ filterWin | *frame film | moment fan contour *reactions plane | r1 r2 r3 r4 r5 r6 | colors v [" />
        <div className="ml-px flex h-[21px] w-44 shrink-0 items-center bg-[#e8e8f2]">
          <span className="ml-[5px] h-[11px] w-3 bg-[#c9fbfb]" />
          <select aria-label="Coordinate system" className="ml-1 flex-1 appearance-none bg-transparent outline-none"><option>1 - Global XYZ</option></select>
        </div>
      </div>
      <div className="flex min-h-0 flex-1">
        <Navigator />
        <main className="ml-1 min-w-0 flex-1 bg-white"><ModelView /></main>
      </div>
    </div>
  );
}
